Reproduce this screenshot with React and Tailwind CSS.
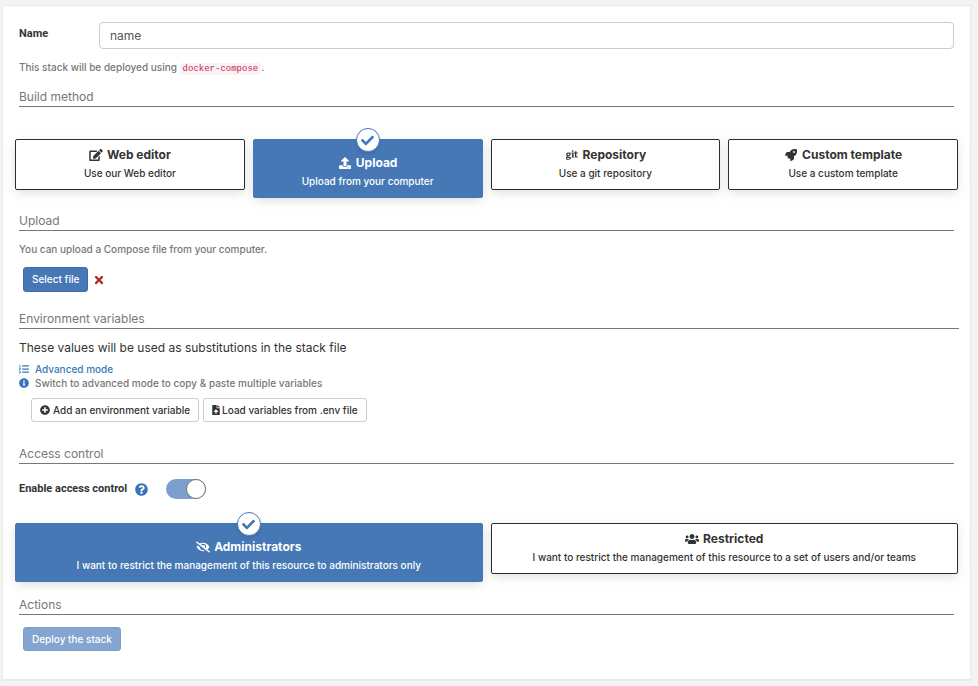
import React, { useState } from 'react';
import {
  FaCheck,
  FaEdit,
  FaEyeSlash,
  FaFileUpload,
  FaGit,
  FaInfoCircle,
  FaListOl,
  FaPlusCircle,
  FaQuestionCircle,
  FaRocket,
  FaTimes,
  FaUpload,
  FaUsers,
} from 'react-icons/fa';

const buildMethods = [
  { id: 'editor', icon: FaEdit, title: 'Web editor', text: 'Use our Web editor' },
  { id: 'upload', icon: FaUpload, title: 'Upload', text: 'Upload from your computer' },
  { id: 'repository', icon: FaGit, title: 'Repository', text: 'Use a git repository' },
  { id: 'template', icon: FaRocket, title: 'Custom template', text: 'Use a custom template' },
];

const ownerships = [
  {
    id: 'administrators',
    icon: FaEyeSlash,
    title: 'Administrators',
    text: 'I want to restrict the management of this resource to administrators only',
  },
  {
    id: 'restricted',
    icon: FaUsers,
    title: 'Restricted',
    text: 'I want to restrict the management of this resource to a set of users and/or teams',
  },
];

function SectionTitle({ children, className = '' }) {
  return (
    <h2 className={`border-b border-[#777] text-[12px] leading-[19px] text-[#777] ${className}`}>
      {children}
    </h2>
  );
}

function BoxOption({ name, option, checked, onSelect }) {
  const Icon = option.icon;
  return (
    <label
      className={`relative flex min-w-0 flex-1 cursor-pointer flex-col items-center gap-[3px] rounded-[2px] border px-4 pb-2 text-center shadow-[0_3px_10px_-2px_rgba(161,170,166,0.5)] ${
        checked ? 'border-[#4678b6] bg-[#4678b6] pt-[15px] text-white' : 'border-[#2d2d2d] bg-white pt-[7px] text-[#333]'
      }`}
    >
      <input
        type="radio"
        name={name}
        value={option.id}
        checked={checked}
        onChange={() => onSelect(option.id)}
        className="sr-only"
      />
      {checked && (
        <span className="absolute -top-3 left-1/2 flex size-6 -translate-x-1/2 items-center justify-center rounded-full border border-[#4678b6] bg-white text-[#4678b6] shadow-[0_2px_5px_-2px_rgba(0,0,0,0.25)]">
          <FaCheck className="size-[13px]" />
        </span>
      )}
      <span className="flex items-center gap-1 text-[12px] leading-4 font-bold">
        <Icon className="h-3 w-[14px] shrink-0" />
        {option.title}
      </span>
      <span className="text-[10px] leading-[15px] font-medium">{option.text}</span>
    </label>
  );
}

export default function App() {
  const [stackName, setStackName] = useState('name');
  const [method, setMethod] = useState('upload');
  const [ownership, setOwnership] = useState('administrators');
  const [accessControl, setAccessControl] = useState(true);

  return (
    <div className="min-h-screen bg-[#f3f3f3] pt-[5px] pr-[7px] pb-[5px] pl-[2px] font-['Inter','Liberation_Sans',sans-serif] text-[#333]">
      <form
        className="border border-b-2 border-[#e9e9e9] bg-white px-4 pt-4 pb-[28px]"
        onSubmit={(event) => event.preventDefault()}
      >
        <div className="flex items-start">
          <label
            htmlFor="stack-name"
            className="w-20 shrink-0 font-['Roboto','Liberation_Sans',sans-serif] text-[11px] leading-[24px] font-bold"
          >
            Name
          </label>
          <input
            id="stack-name"
            type="text"
            value={stackName}
            onChange={(event) => setStackName(event.target.value)}
            className="h-[27px] min-w-0 flex-1 rounded-[4px] border border-[#ccc] bg-white px-[10px] text-[12px] text-[#555] outline-none"
          />
        </div>

        <p className="mt-[10px] text-[10px] leading-4 font-medium text-[#777]">
          This stack will be deployed using{' '}
          <code className="rounded-[3px] bg-[#f9f2f4] px-[3px] py-px font-['Liberation_Mono',monospace] text-[9px] font-normal text-[#c7254e]">
            docker-compose
          </code>
          .
        </p>

        <SectionTitle className="mt-[10px]">Build method</SectionTitle>
        <div className="-mx-1 mt-8 flex h-[59px] items-start gap-2">
          {buildMethods.map((option) => (
            <BoxOption
              key={option.id}
              name="build-method"
              option={option}
              checked={method === option.id}
              onSelect={setMethod}
            />
          ))}
        </div>

        <SectionTitle className="mt-[13px]">Upload</SectionTitle>
        <p className="mt-[10px] text-[10px] leading-4 font-medium text-[#777]">
          You can upload a Compose file from your computer.
        </p>
        <div className="mt-[10px] flex items-center gap-[5px] pl-1">
          <button
            type="button"
            className="h-[25px] rounded-[3px] border border-[#3f6ca5] bg-[#4678b6] px-2 text-[10px] font-medium text-white"
          >
            Select file
          </button>
          <FaTimes className="size-3 text-[#ae2323]" aria-label="No file selected" />
        </div>

        <SectionTitle className="-mr-[5px] mt-[17px]">Environment variables</SectionTitle>
        <p className="mt-[10px] text-[12px] leading-[18px]">
          These values will be used as substitutions in the stack file
        </p>
        <a
          href="#advanced"
          className="mt-[5px] flex items-center gap-[6px] text-[10px] leading-[14px] font-medium text-[#337ab7]"
        >
          <FaListOl className="size-[10px]" />
          Advanced mode
        </a>
        <p className="flex items-center gap-[6px] text-[10px] leading-[14px] font-medium text-[#777]">
          <FaInfoCircle className="size-[10px] text-[#3a73b8]" />
          Switch to advanced mode to copy &amp; paste multiple variables
        </p>
        <div className="mt-2 flex gap-1 pl-3">
          <button
            type="button"
            className="flex h-6 items-center gap-[3px] rounded-[3px] border border-[#ccc] bg-white px-2 text-[10px] font-medium text-[#333]"
          >
            <FaPlusCircle className="size-[10px]" />
            Add an environment variable
          </button>
          <button
            type="button"
            className="flex h-6 items-center gap-[2px] rounded-[3px] border border-[#ccc] bg-white px-2 text-[10px] font-medium text-[#333]"
          >
            <FaFileUpload className="h-[10px] w-2" />
            Load variables from .env file
          </button>
        </div>

        <SectionTitle className="mt-[22px]">Access control</SectionTitle>
        <div className="mt-[15px] flex h-5 items-center">
          <label
            htmlFor="access-control"
            className="font-['Roboto','Liberation_Sans',sans-serif] text-[11px] font-bold"
          >
            Enable access control
          </label>
          <FaQuestionCircle className="ml-2 size-[13px] text-[#3a73b8]" />
          <input
            id="access-control"
            type="checkbox"
            checked={accessControl}
            onChange={(event) => setAccessControl(event.target.checked)}
            className="ml-[18px] flex h-5 w-10 cursor-pointer appearance-none rounded-full bg-[#bbb] before:size-5 before:rounded-full before:border before:border-[#777] before:bg-white before:content-[''] checked:justify-end checked:bg-[#7ba0cd]"
          />
        </div>

        <div className="-mx-1 mt-6 flex h-[59px] items-start gap-2">
          {ownerships.map((option) => (
            <BoxOption
              key={option.id}
              name="ownership"
              option={option}
              checked={ownership === option.id}
              onSelect={setOwnership}
            />
          ))}
        </div>

        <SectionTitle className="mt-[13px]">Actions</SectionTitle>
        <div className="mt-3 flex pl-1">
          <button
            type="submit"
            disabled
            className="h-6 rounded-[3px] border border-[#799fcb] bg-[#83a5cf] px-2 text-[10px] font-medium text-white"
          >
            Deploy the stack
          </button>
        </div>
      </form>
    </div>
  );
}
